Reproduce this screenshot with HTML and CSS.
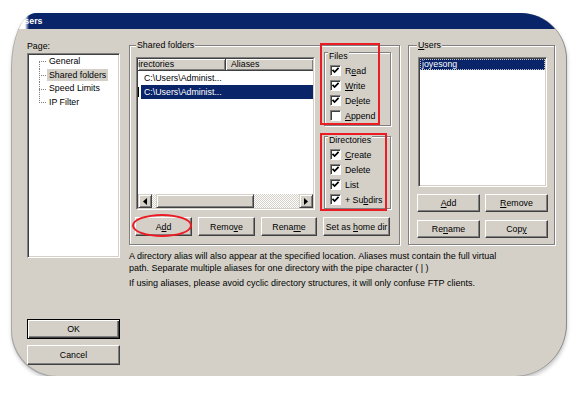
FILE: index.html
```html
<!DOCTYPE html>
<html lang="en">
<head>
    <meta charset="UTF-8">
    <title>Users</title>
    <link rel="stylesheet" href="styles.css">
</head>
<body>

<div class="dialog">
    <div class="titlebar">Users</div>

    <div class="content">
        <!-- left: page tree and OK / Cancel -->
        <div class="side">
            <div class="label">Page:</div>
            <ul class="tree">
                <li class="first"><span>General</span></li>
                <li><span class="sel">Shared folders</span></li>
                <li><span>Speed Limits</span></li>
                <li class="last"><span>IP Filter</span></li>
            </ul>
            <button class="btn default ok">OK</button>
            <button class="btn cancel">Cancel</button>
        </div>

        <div class="main">
            <div class="groups">
                <div class="group shared">
                    <span class="caption">Shared folders</span>
                    <div class="shared-top">
                        <div class="listview">
                            <div class="lv-inner">
                                <div class="lv-head">
                                    <div class="lv-col c1"><span>Directories</span></div>
                                    <div class="lv-col c2">Aliases</div>
                                </div>
                                <div class="lv-rows">
                                    <div class="lv-row">C:\Users\Administ...</div>
                                    <div class="lv-row sel">C:\Users\Administ...</div>
                                </div>
                                <div class="hscroll">
                                    <div class="sb-btn">
                                        <svg width="4" height="7" viewBox="0 0 4 7"><path d="M4 0 L0 3.5 L4 7 Z" fill="#000"/></svg>
                                    </div>
                                    <div class="sb-track"><div class="sb-thumb"></div></div>
                                    <div class="sb-btn">
                                        <svg width="4" height="7" viewBox="0 0 4 7"><path d="M0 0 L4 3.5 L0 7 Z" fill="#000"/></svg>
                                    </div>
                                </div>
                            </div>
                        </div>

                        <div class="perms">
                            <div class="group sub files">
                                <span class="caption low">Files</span>
                                <label class="check"><span class="box"><svg width="9" height="9" viewBox="0 0 9 9"><path d="M1.5 3.8 L3.6 6 L7.6 1.8" fill="none" stroke="#000" stroke-width="1.7"/></svg></span><span>R<u>e</u>ad</span></label>
                                <label class="check"><span class="box"><svg width="9" height="9" viewBox="0 0 9 9"><path d="M1.5 3.8 L3.6 6 L7.6 1.8" fill="none" stroke="#000" stroke-width="1.7"/></svg></span><span><u>W</u>rite</span></label>
                                <label class="check"><span class="box"><svg width="9" height="9" viewBox="0 0 9 9"><path d="M1.5 3.8 L3.6 6 L7.6 1.8" fill="none" stroke="#000" stroke-width="1.7"/></svg></span><span>De<u>l</u>ete</span></label>
                                <label class="check"><span class="box"></span><span><u>A</u>ppend</span></label>
                                <span class="mark mark-files"></span>
                            </div>
                            <div class="group sub dirs">
                                <span class="caption low">Directories</span>
                                <label class="check"><span class="box"><svg width="9" height="9" viewBox="0 0 9 9"><path d="M1.5 3.8 L3.6 6 L7.6 1.8" fill="none" stroke="#000" stroke-width="1.7"/></svg></span><span><u>C</u>reate</span></label>
                                <label class="check"><span class="box"><svg width="9" height="9" viewBox="0 0 9 9"><path d="M1.5 3.8 L3.6 6 L7.6 1.8" fill="none" stroke="#000" stroke-width="1.7"/></svg></span><span>Delete</span></label>
                                <label class="check"><span class="box"><svg width="9" height="9" viewBox="0 0 9 9"><path d="M1.5 3.8 L3.6 6 L7.6 1.8" fill="none" stroke="#000" stroke-width="1.7"/></svg></span><span>List</span></label>
                                <label class="check"><span class="box"><svg width="9" height="9" viewBox="0 0 9 9"><path d="M1.5 3.8 L3.6 6 L7.6 1.8" fill="none" stroke="#000" stroke-width="1.7"/></svg></span><span>+ Su<u>b</u>dirs</span></label>
                                <span class="mark mark-dirs"></span>
                            </div>
                        </div>
                    </div>

                    <div class="btn-row">
                        <div class="ring-wrap">
                            <button class="btn w57">A<u>d</u>d</button>
                            <span class="ring"></span>
                        </div>
                        <button class="btn w57">Remo<u>v</u>e</button>
                        <button class="btn w56">Rena<u>m</u>e</button>
                        <button class="btn w67">Set as <u>h</u>ome dir</button>
                    </div>
                </div>

                <div class="group users">
                    <span class="caption"><u>U</u>sers</span>
                    <div class="userlist">
                        <div class="user sel">joyesong</div>
                    </div>
                    <div class="user-btns">
                        <button class="btn"><u>A</u>dd</button>
                        <button class="btn"><u>R</u>emove</button>
                        <button class="btn">Re<u>n</u>ame</button>
                        <button class="btn">Cop<u>y</u></button>
                    </div>
                </div>
            </div>

            <div class="notes">
                <p>A directory alias will also appear at the specified location. Aliases must contain the full virtual path. Separate multiple aliases for one directory with the pipe character ( | )</p>
                <p>If using aliases, please avoid cyclic directory structures, it will only confuse FTP clients.</p>
            </div>
        </div>
    </div>
</div>

</body>
</html>
```

FILE: styles.css
```css
/* classic windows dialog */
* {
    box-sizing: border-box;
}

body {
    margin: 0;
    background: #fff;
    font-family: "Liberation Sans", Arial, sans-serif;
    font-size: 8.8px;
    color: #000;
}

.dialog {
    width: 555px;
    height: 363px;
    margin: 13px 0 0 12px;
    background: #d4d0c8;
    border-right: 1px solid #8a8a8a;
    border-radius: 24px 46px 52px 46px / 54px 46px 52px 46px;
    overflow: hidden;
    box-shadow: -1px 1px 0 #a8a8a8, 0 3px 4px rgba(0, 0, 0, 0.25);
}

/* the left end of the bar fades out in the picture */
.titlebar {
    height: 16px;
    line-height: 16px;
    padding-left: 6px;
    background: linear-gradient(to right, #fff 0 13px, #0a246a 17px);
    color: #fff;
    font-weight: bold;
}

.content {
    display: flex;
    height: 347px;
    padding-left: 15px;
}

/* left column */
.side {
    width: 93px;
    display: flex;
    flex-direction: column;
    padding-top: 11px;
}

.label {
    height: 13px;
    line-height: 12px;
}

.tree {
    list-style: none;
    margin: 0;
    padding: 1px 0 0 0;
    height: 205px;
    background: #fff;
    border: 1px solid;
    border-color: #808080 #fff #fff #808080;
    box-shadow: inset 1px 1px #404040, inset -1px -1px #d4d0c8;
}

.tree li {
    height: 13.7px;
    line-height: 13.7px;
    padding-left: 19px;
    white-space: nowrap;
    background:
        repeating-linear-gradient(to right, #808080 0 1px, transparent 1px 2px) 11px 50% / 7px 1px no-repeat,
        repeating-linear-gradient(to bottom, #808080 0 1px, transparent 1px 2px) 11px 0 / 1px 100% no-repeat;
}

.tree li.first {
    background:
        repeating-linear-gradient(to right, #808080 0 1px, transparent 1px 2px) 11px 50% / 7px 1px no-repeat,
        repeating-linear-gradient(to bottom, #808080 0 1px, transparent 1px 2px) 11px 100% / 1px 50% no-repeat;
}

.tree li.last {
    background:
        repeating-linear-gradient(to right, #808080 0 1px, transparent 1px 2px) 11px 50% / 7px 1px no-repeat,
        repeating-linear-gradient(to bottom, #808080 0 1px, transparent 1px 2px) 11px 0 / 1px 50% no-repeat;
}

.tree span {
    padding: 1px 2px;
}

.tree .sel {
    background: #d4d0c8;
}

/* buttons */
.btn {
    font: inherit;
    color: #000;
    padding: 0;
    margin: 0;
    height: 19px;
    background: #d4d0c8;
    border: 1px solid;
    border-color: #fff #404040 #404040 #fff;
    box-shadow: inset -1px -1px #808080;
}

.btn.default {
    border: 1px solid #000;
    box-shadow: inset 1px 1px #fff, inset -1px -1px #404040, inset -2px -2px #808080;
}

.ok {
    height: 20px;
    margin-top: 61px;
}

.cancel {
    height: 20px;
    margin-top: 6px;
}

/* right part */
.main {
    width: 426px;
    margin-left: 9px;
    padding-top: 16px;
}

.groups {
    display: flex;
    gap: 8px;
}

.group {
    position: relative;
    border: 1px solid #808080;
    box-shadow: inset 1px 1px #fff, 1px 1px #fff;
}

.caption {
    position: absolute;
    top: -7px;
    left: 6px;
    padding: 0 1px;
    line-height: 12px;
    background: #d4d0c8;
    white-space: nowrap;
}

.caption.low {
    top: -3px;
    left: 3px;
}

.shared {
    width: 271px;
    height: 200px;
    padding: 6px 0 0 6px;
}

.shared-top {
    display: flex;
}

.listview {
    width: 179px;
    height: 153px;
    margin-top: 5px;
    background: #fff;
    border: 1px solid;
    border-color: #808080 #fff #fff #808080;
}

.lv-inner {
    height: 100%;
    display: flex;
    flex-direction: column;
    border: 1px solid;
    border-color: #404040 #d4d0c8 #d4d0c8 #404040;
}

.lv-head {
    display: flex;
    height: 12px;
}

.lv-col {
    height: 12px;
    line-height: 11px;
    overflow: hidden;
    white-space: nowrap;
    background: #d4d0c8;
    border-right: 1px solid #404040;
    border-bottom: 1px solid #404040;
    box-shadow: inset 1px 1px #fff, inset -1px -1px #808080;
}

.c1 {
    width: 88px;
}

.c1 span {
    margin-left: -6px;
}

.c2 {
    flex: 1;
    padding-left: 5px;
    border-right: none;
}

.lv-rows {
    flex: 1;
}

.lv-row {
    height: 14px;
    line-height: 14px;
    padding-left: 6px;
    white-space: nowrap;
}

.lv-row.sel {
    color: #fff;
    background:
        linear-gradient(#000, #000) 0 2px / 1px 10px no-repeat,
        linear-gradient(#0a246a, #0a246a) 3px 0 / calc(100% - 3px) 100% no-repeat;
}

.hscroll {
    display: flex;
    height: 14px;
}

.sb-btn {
    width: 14px;
    height: 14px;
    display: flex;
    align-items: center;
    justify-content: center;
    background: #d4d0c8;
    border: 1px solid;
    border-color: #d4d0c8 #404040 #404040 #d4d0c8;
    box-shadow: inset 1px 1px #fff, inset -1px -1px #808080;
}

.sb-track {
    flex: 1;
    background: repeating-conic-gradient(#fff 0 25%, #d4d0c8 0 50%) 0 0 / 2px 2px;
}

.sb-thumb {
    width: 98px;
    height: 14px;
    margin-left: 4px;
    background: #d4d0c8;
    border: 1px solid;
    border-color: #d4d0c8 #404040 #404040 #d4d0c8;
    box-shadow: inset 1px 1px #fff, inset -1px -1px #808080;
}

.perms {
    width: 67px;
    margin-left: 9px;
    display: flex;
    flex-direction: column;
    gap: 10px;
}

.sub {
    padding: 10px 0 0 5px;
}

.files {
    height: 74px;
}

.dirs {
    height: 73px;
}

.check {
    display: flex;
    align-items: center;
    gap: 4px;
    height: 15px;
    white-space: nowrap;
}

.box {
    width: 11px;
    height: 11px;
    flex: none;
    display: flex;
    align-items: center;
    justify-content: center;
    background: #fff;
    border: 1px solid;
    border-color: #808080 #fff #fff #808080;
    box-shadow: inset 1px 1px #404040;
}

/* red annotations drawn over the dialog */
.mark {
    position: absolute;
    border: 2px solid #ec1c24;
}

.mark-files {
    left: -5px;
    top: -10px;
    width: 60px;
    height: 82px;
}

.mark-dirs {
    left: -5px;
    top: -4px;
    width: 67px;
    height: 78px;
}

.btn-row {
    display: flex;
    gap: 6px;
    margin-top: 7px;
    margin-left: -1px;
}

.ring-wrap {
    position: relative;
}

.ring {
    position: absolute;
    left: -3px;
    top: -3px;
    width: 60px;
    height: 23px;
    border: 2px solid #ec1c24;
    border-radius: 50%;
}

.w57 {
    width: 57px;
}

.w56 {
    width: 56px;
}

.w67 {
    width: 67px;
}

.users {
    width: 147px;
    height: 200px;
    padding: 10px 0 0 8px;
}

.users .caption {
    left: 8px;
}

.userlist {
    width: 129px;
    height: 130px;
    margin: 1px 0 0 1px;
    background: #fff;
    border: 1px solid;
    border-color: #808080 #fff #fff #808080;
    box-shadow: inset 1px 1px #404040, inset -1px -1px #d4d0c8;
    padding: 1px;
}

.user {
    height: 11px;
    line-height: 11px;
    padding-left: 2px;
}

.user.sel {
    background: #0a246a;
    color: #fff;
    outline: 1px dotted #c8c8c8;
    outline-offset: -1px;
}

.user-btns {
    display: grid;
    grid-template-columns: 63px 63px;
    gap: 8px 5px;
    margin-top: 7px;
}

.user-btns .btn {
    height: 18px;
}

.notes {
    width: 380px;
    margin-top: 5px;
    font-size: 9px;
    line-height: 12px;
}

.notes p {
    margin: 0;
}

.notes p + p {
    margin-top: 3px;
}
```
